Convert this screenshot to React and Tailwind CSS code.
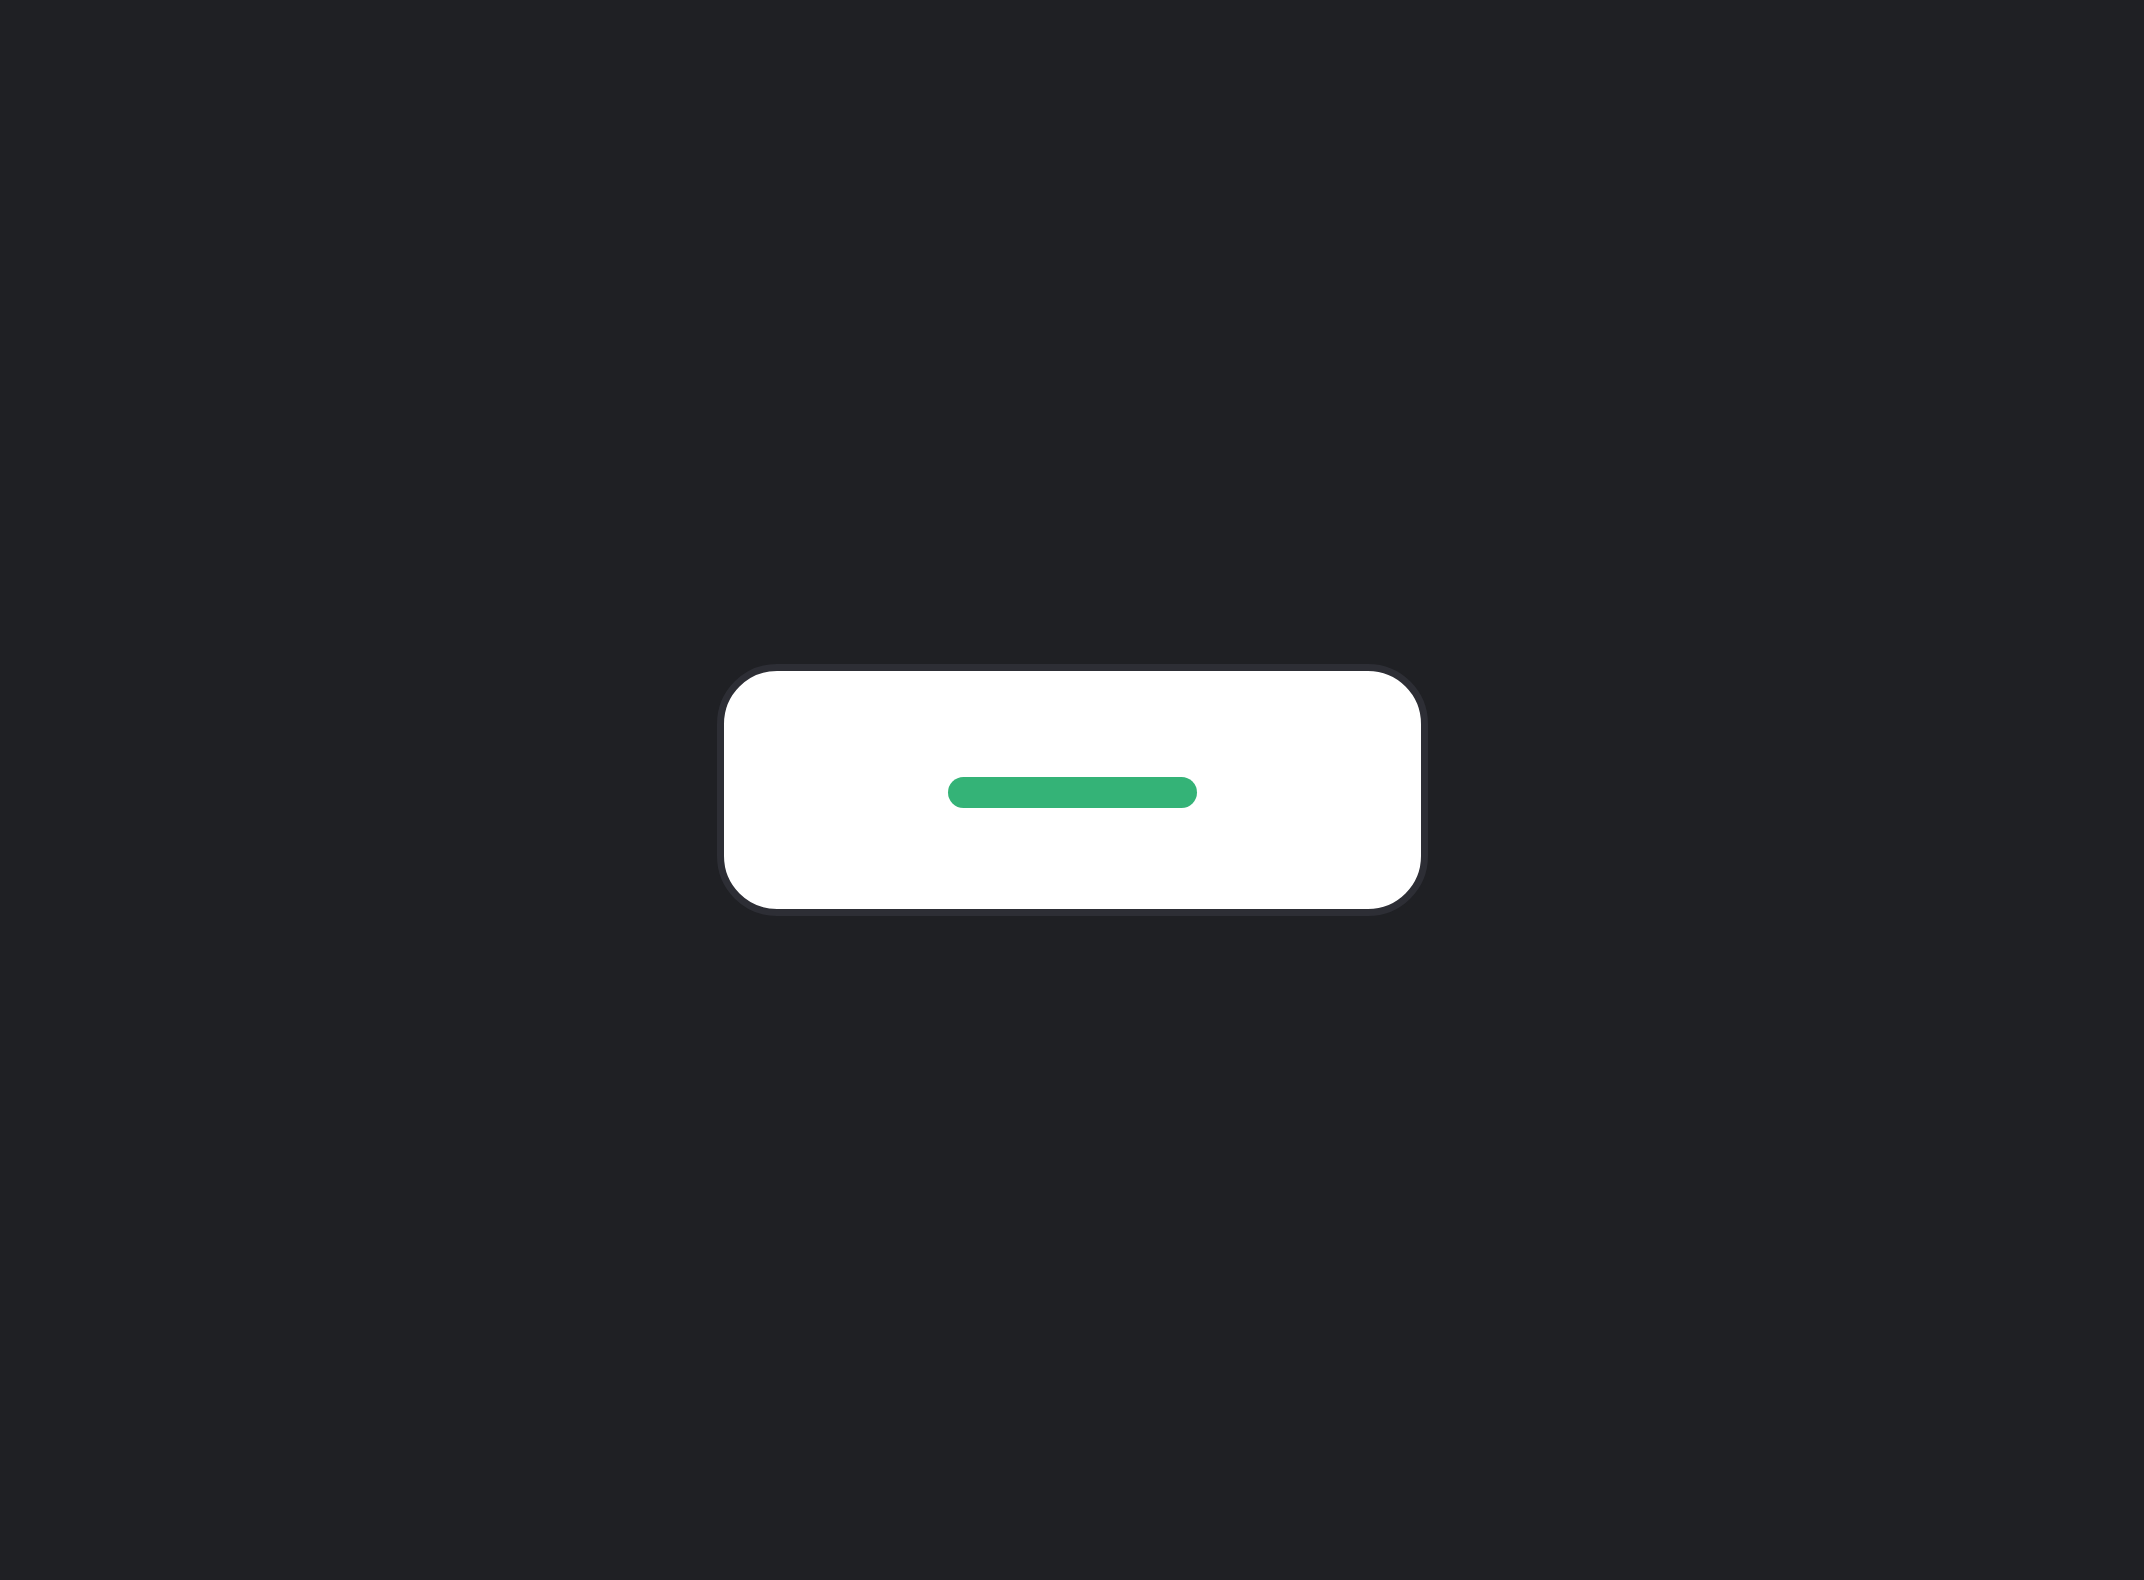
import React from "react";

const App = () => {
  return (
    <div className="min-h-screen w-full bg-[#1f2024] flex items-center justify-center">
      <div className="w-[711px] h-[252px] rounded-[60px] border-[7px] border-[#2d2e35] bg-white flex items-center justify-center">
        {/* progress / loading bar */}
        <div className="mt-[5px] w-[249px] h-[31px] rounded-full bg-[#34b377]" />
      </div>
    </div>
  );
};

export default App;
